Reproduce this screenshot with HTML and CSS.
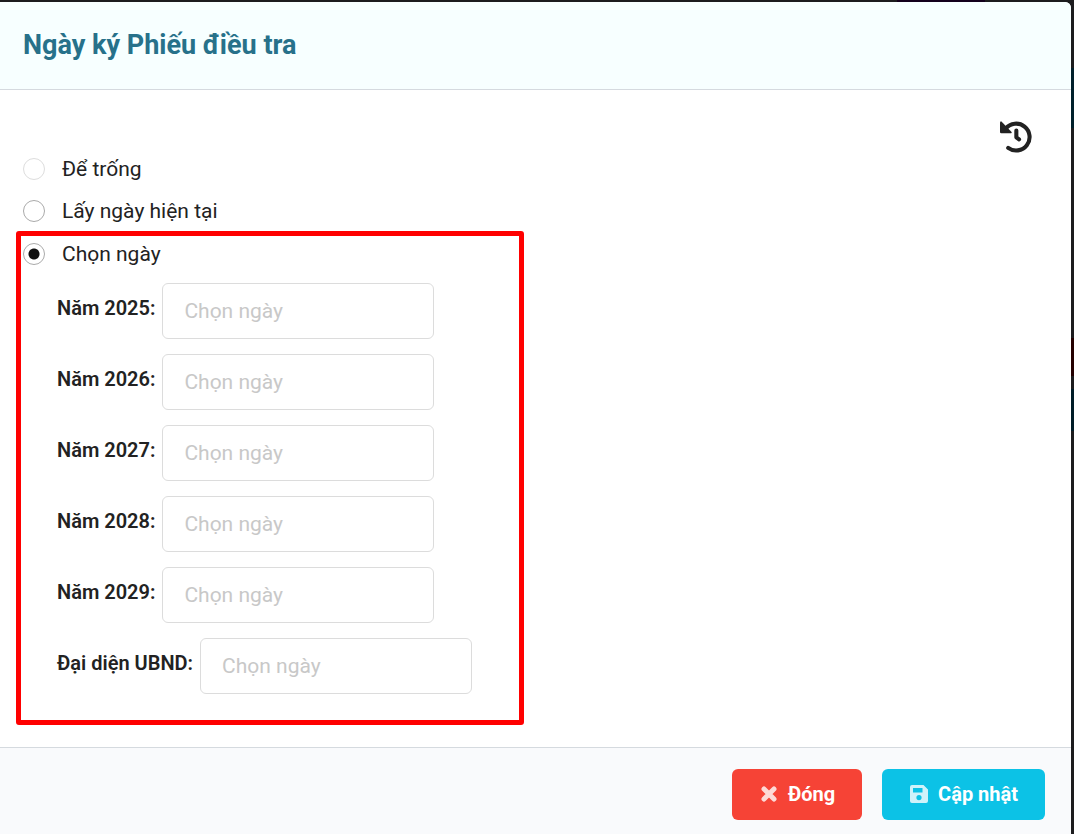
FILE: index.html
```html
<!DOCTYPE html>
<html lang="vi">
<head>
    <meta charset="UTF-8">
    <meta name="viewport" content="width=device-width, initial-scale=1">
    <title>Ngày ký Phiếu điều tra</title>
    <link rel="stylesheet" href="styles.css">
</head>
<body>
    <form class="modal">
        <header class="modal-header">
            <h1 class="modal-title">Ngày ký Phiếu điều tra</h1>
        </header>
        <main class="modal-body">
            <div class="toolbar">
                <button class="btn-history" type="button" aria-label="Lịch sử">
                    <svg viewBox="0 0 94 94" width="32" height="32">
                        <path d="M17 22A39.500 39.500 0 1 1 24 79" fill="none" stroke="currentColor" stroke-width="12" stroke-linecap="round"/>
                        <path d="M1 2q2-2 4 0l29 30q2 4-2 4H4q-4 0-4-4V4z" fill="currentColor"/>
                        <path d="M48 28v20l8 6" fill="none" stroke="currentColor" stroke-width="12" stroke-linecap="round" stroke-linejoin="round"/>
                    </svg>
                </button>
            </div>
            <div class="options">
                <label class="radio radio-muted"><input type="radio" name="mode" value="empty">Để trống</label>
                <label class="radio"><input type="radio" name="mode" value="today">Lấy ngày hiện tại</label>
            </div>
            <div class="date-box">
                <label class="radio"><input type="radio" name="mode" value="pick" checked>Chọn ngày</label>
                <div class="date-list">
                    <div class="date-row">
                        <label for="y2025">Năm 2025:</label>
                        <input type="text" id="y2025" placeholder="Chọn ngày">
                    </div>
                    <div class="date-row">
                        <label for="y2026">Năm 2026:</label>
                        <input type="text" id="y2026" placeholder="Chọn ngày">
                    </div>
                    <div class="date-row">
                        <label for="y2027">Năm 2027:</label>
                        <input type="text" id="y2027" placeholder="Chọn ngày">
                    </div>
                    <div class="date-row">
                        <label for="y2028">Năm 2028:</label>
                        <input type="text" id="y2028" placeholder="Chọn ngày">
                    </div>
                    <div class="date-row">
                        <label for="y2029">Năm 2029:</label>
                        <input type="text" id="y2029" placeholder="Chọn ngày">
                    </div>
                    <div class="date-row">
                        <label for="ubnd">Đại diện UBND:</label>
                        <input type="text" id="ubnd" placeholder="Chọn ngày">
                    </div>
                </div>
            </div>
        </main>
        <footer class="modal-footer">
            <button class="btn btn-close" type="button">
                <svg viewBox="0 0 20 20" width="20" height="20">
                    <path d="M5 5l10 10M15 5L5 15" fill="none" stroke="currentColor" stroke-width="5" stroke-linecap="round"/>
                </svg>
                Đóng
            </button>
            <button class="btn btn-save" type="button">
                <svg viewBox="0 0 20 20" width="20" height="20">
                    <path fill="currentColor" fill-rule="evenodd" d="M3 1h11.500L19 5.500V17a2 2 0 0 1-2 2H3a2 2 0 0 1-2-2V3a2 2 0 0 1 2-2zM4 4v4.500h9.500V4zM10 11a2.600 2.600 0 1 0 0 5.200 2.600 2.600 0 0 0 0-5.200z"/>
                </svg>
                Cập nhật
            </button>
        </footer>
    </form>
</body>
</html>
```
FILE: styles.css
```css
*{box-sizing: border-box;margin: 0;padding: 0;}
body{
    min-height: 100vh;
    padding: 2px 3px 0 0;
    font: 21px/30px Roboto, "Noto Sans", sans-serif;
    color: #222;
    background:
        linear-gradient(#13001c, #13001c) 897px 0 / 88px 2px no-repeat,
        linear-gradient(#1c1c1e 68px, #00202b 68px, #00202b 128px, #1c1c1e 128px, #1c1c1e 338px, #240000 338px, #240000 376px, #1c1c1e 376px, #1c1c1e 389px, #001c28 389px, #001c28 431px, #1c1c1e 431px);
}
button,input{font: inherit;}
.modal{
    display: flex;
    flex-direction: column;
    min-height: calc(100vh - 2px);
    background: #fff;
    border-radius: 0 6px 0 0;
    overflow: hidden;
}
.modal-header{
    padding: 22px 23px 23px;
    background: #f7ffff;
    border-bottom: 1px solid #d5dadf;
}
.modal-title{font-size: 27px;line-height: 42px;font-weight: 700;color: #27718a;}
.modal-body{flex: 1;padding: 31px 16px 22px;}
.toolbar{display: flex;justify-content: flex-end;height: 26px;padding-right: 23px;}
.btn-history{width: 32px;height: 32px;border: 0;background: none;color: #222;cursor: pointer;}
.btn-history svg{display: block;}

.options{padding-left: 7px;}
.radio{display: flex;align-items: center;gap: 17px;height: 42px;cursor: pointer;}
.options .radio{padding-top: 2px;}
.radio input{
    appearance: none;
    width: 22px;
    height: 22px;
    border: 1px solid #aaa;
    border-radius: 50%;
    background: #fff;
}
.radio input:checked{background: radial-gradient(circle, #111 5px, #fff 6px);}
.radio-muted input{border-color: #ddd;}

.date-box{
    width: 508px;
    max-width: 100%;
    padding: 0 2px 26px;
    border: 5px solid #f00;
    border-radius: 3px;
}
.date-box .radio{height: 36px;}
.date-list{display: grid;gap: 15px;padding: 11px 0 0 34px;}
.date-row{display: flex;align-items: center;gap: 7px;}
.date-row label{padding-bottom: 6px;font-size: 20px;font-weight: 600;}
.date-row input{
    width: 272px;
    height: 56px;
    padding: 0 21px;
    border: 1px solid #dcdcdc;
    border-radius: 6px;
    background: #fff;
    color: #222;
}
.date-row input::placeholder{color: #c8c8c8;opacity: 1;}

.modal-footer{
    display: flex;
    justify-content: flex-end;
    gap: 20px;
    padding: 21px 26px 15px;
    background: #f9fafc;
    border-top: 1px solid #d5dadf;
}
.btn{
    display: flex;
    align-items: center;
    gap: 9px;
    height: 51px;
    padding: 0 27px 2px;
    border: 0;
    border-radius: 6px;
    color: #fff;
    font-size: 20px;
    font-weight: 700;
    cursor: pointer;
}
.btn svg{opacity: .8;}
.btn-close{background: #f64336;}
.btn-save{background: #0cc2e6;}
```
